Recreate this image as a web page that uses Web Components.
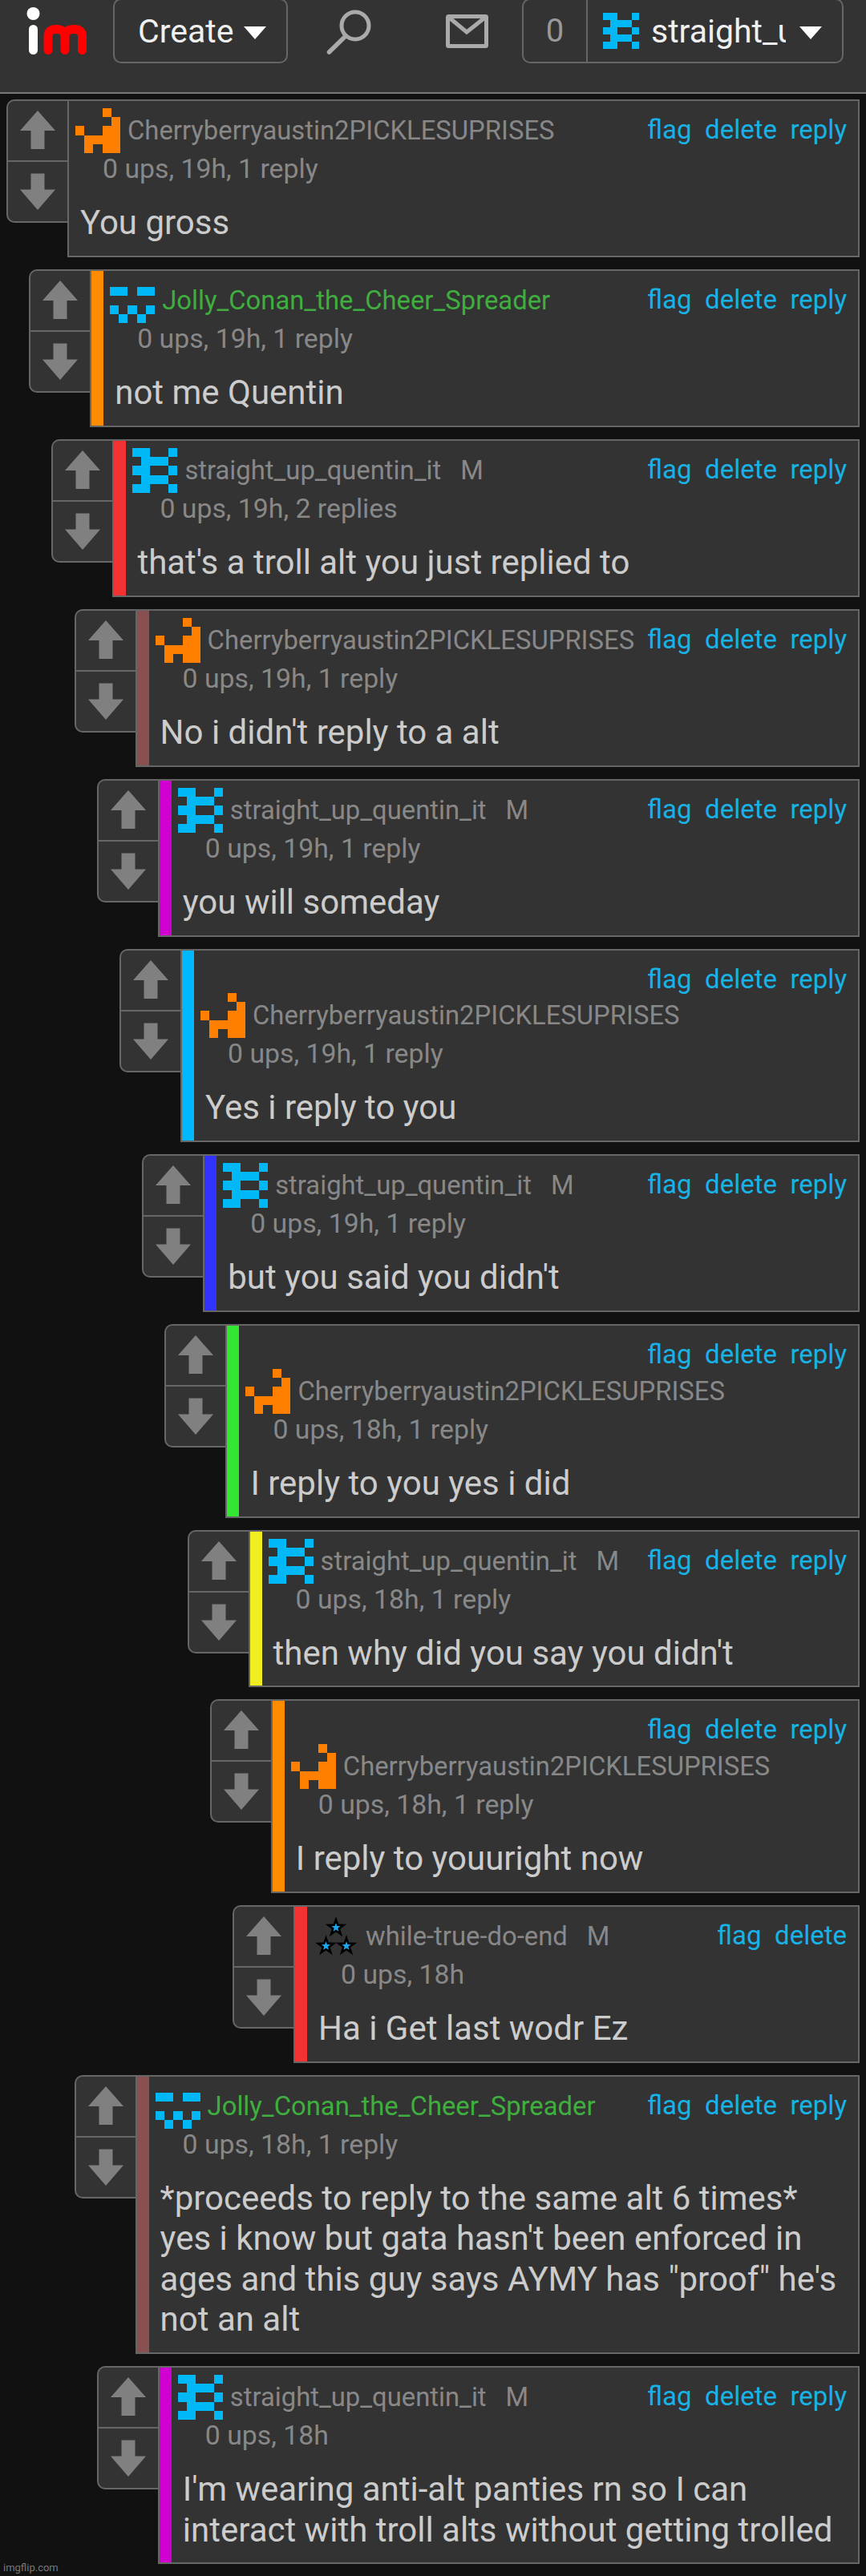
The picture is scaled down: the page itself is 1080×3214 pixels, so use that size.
<!DOCTYPE html>
<html><head><meta charset="utf-8">
<style>
html,body{margin:0;background:#111;font-family:Roboto,"Liberation Sans",sans-serif;}
body{position:relative;height:3214px;overflow:hidden;}
im-thread{display:block;}
</style></head>
<body>
<im-topbar></im-topbar>
<im-thread>
<im-comment level="0" av="cherry" name="Cherryberryaustin2PICKLESUPRISES" meta="0 ups, 19h, 1 reply">You gross</im-comment>
<im-comment level="1" color="#ff8c00" av="jolly" green name="Jolly_Conan_the_Cheer_Spreader" meta="0 ups, 19h, 1 reply">not me Quentin</im-comment>
<im-comment level="2" color="#f33333" av="straight" mod name="straight_up_quentin_it" meta="0 ups, 19h, 2 replies">that's a troll alt you just replied to</im-comment>
<im-comment level="3" color="#885050" av="cherry" name="Cherryberryaustin2PICKLESUPRISES" meta="0 ups, 19h, 1 reply">No i didn't reply to a alt</im-comment>
<im-comment level="4" color="#d000d0" av="straight" mod name="straight_up_quentin_it" meta="0 ups, 19h, 1 reply">you will someday</im-comment>
<im-comment level="5" color="#00b8ff" av="cherry" name="Cherryberryaustin2PICKLESUPRISES" meta="0 ups, 19h, 1 reply">Yes i reply to you</im-comment>
<im-comment level="6" color="#3333ff" av="straight" mod name="straight_up_quentin_it" meta="0 ups, 19h, 1 reply">but you said you didn't</im-comment>
<im-comment level="7" color="#33e633" av="cherry" name="Cherryberryaustin2PICKLESUPRISES" meta="0 ups, 18h, 1 reply">I reply to you yes i did</im-comment>
<im-comment level="8" color="#eeee22" av="straight" mod name="straight_up_quentin_it" meta="0 ups, 18h, 1 reply">then why did you say you didn't</im-comment>
<im-comment level="9" color="#ff8c00" av="cherry" name="Cherryberryaustin2PICKLESUPRISES" meta="0 ups, 18h, 1 reply">I reply to youuright now</im-comment>
<im-comment level="10" color="#f33333" av="stars" mod noreply name="while-true-do-end" meta="0 ups, 18h">Ha i Get last wodr Ez</im-comment>
<im-comment level="3" color="#885050" av="jolly" green name="Jolly_Conan_the_Cheer_Spreader" meta="0 ups, 18h, 1 reply">*proceeds to reply to the same alt 6 times*<br>yes i know but gata hasn't been enforced in<br>ages and this guy says AYMY has "proof" he's<br>not an alt</im-comment>
<im-comment level="4" color="#d000d0" av="straight" mod name="straight_up_quentin_it" meta="0 ups, 18h">I'm wearing anti-alt panties rn so I can<br>interact with troll alts without getting trolled</im-comment>
</im-thread>
<im-watermark>imgflip.com</im-watermark>
<script>
const GRIDS={
 cherry:{c:'#ff7f00',r:['...#.','....#','#..##','.####','.#.##']},
 straight:{c:'#00b8f5',r:['##..#','.###.','##..#','.###.','##..#']},
 jolly:{c:'#00b8f5',r:['.....','##.##','.....','#.#.#','.#.#.']}
};
function star(cx,cy,R,r,fill){let p=[];for(let i=0;i<10;i++){const a=-Math.PI/2+i*Math.PI/5,q=i%2?r:R;p.push((cx+q*Math.cos(a)).toFixed(2)+','+(cy+q*Math.sin(a)).toFixed(2));}return `<polygon points="${p.join(' ')}" fill="${fill}"/>`;}
class ImAvatar extends HTMLElement{
 connectedCallback(){
  const k=this.getAttribute('kind'),s=this.getAttribute('size')||56;
  let inner='';
  if(k==='stars'){
    [[28,17],[15.500,40],[41,40]].forEach(([x,y])=>{inner+=star(x,y,14,5.5,'#000')+star(x,y,5.8,2.4,'#1ea7ee');});
  }else{
    const g=GRIDS[k];
    g.r.forEach((row,y)=>[...row].forEach((ch,x)=>{if(ch==='#')inner+=`<rect x="${x*56/5}" y="${y*56/5}" width="${56/5+.05}" height="${56/5+.05}" fill="${g.c}"/>`;}));
  }
  this.attachShadow({mode:'open'}).innerHTML=`<style>:host{display:block;width:${s}px;height:${s}px;flex:none}svg{display:block}</style><svg width="${s}" height="${s}" viewBox="0 0 56 56" shape-rendering="${k==='stars'?'auto':'crispEdges'}">${inner}</svg>`;
 }
}
customElements.define('im-avatar',ImAvatar);

class ImTopbar extends HTMLElement{
 constructor(){super();this.attachShadow({mode:'open'}).innerHTML=`<style>
 :host{display:flex;align-items:flex-start;height:115px;background:#333;border-bottom:2px solid #777;overflow:hidden;box-sizing:content-box;font-family:Roboto,"Liberation Sans",sans-serif}
 svg{display:block;flex:none}
 .btn{box-sizing:border-box;height:81px;margin-top:-2px;border:2px solid #666;border-radius:10px;display:flex;align-items:center;color:#f0f0f0;font-size:41px;flex:none}
 .create{width:218px;padding-left:29px}
 .caret{width:0;height:0;border-left:14px solid transparent;border-right:14px solid transparent;border-top:16px solid #fff;flex:none;margin-top:4px}
 .create .caret{margin-left:13px}
 .search{margin-left:36px}.mail{margin-left:65px}
 .group{margin-left:36px;width:401px}
 .zero{box-sizing:border-box;width:80px;height:100%;border-right:2px solid #666;display:flex;align-items:center;justify-content:center;color:#999;font-size:40px}
 .who{margin-left:19px}
 .nm{margin-left:15px;width:168px;overflow:hidden;white-space:nowrap;margin-right:17px;line-height:60px}
 </style>
 <svg width="141" height="80" viewBox="0 0 141 80">
  <circle cx="41.5" cy="17" r="8" fill="#fff"/>
  <path d="M41.5 36.5V62.5" stroke="#fff" stroke-width="11" stroke-linecap="round" fill="none"/>
  <path d="M60 62.5V45Q60 36.5 70 36.5Q81 36.5 81 46V62.5M81 46Q81 36.5 92 36.5Q102.5 36.5 102.5 45V62.5" stroke="#f00" stroke-width="11" stroke-linecap="round" fill="none"/>
 </svg>
 <div class="btn create"><span>Create</span><i class="caret"></i></div>
 <svg class="search" width="90" height="80" viewBox="395 0 90 80"><circle cx="443" cy="32" r="17" stroke="#aaa" stroke-width="5" fill="none"/><path d="M431 45L410.500 65" stroke="#aaa" stroke-width="5.500" stroke-linecap="round"/></svg>
 <svg class="mail" width="65" height="80" viewBox="550 0 65 80"><rect x="558.500" y="20.500" width="48" height="37" rx="1" stroke="#aaa" stroke-width="5" fill="none"/><path d="M559 21L582 40L606 21" stroke="#aaa" stroke-width="5" fill="none"/></svg>
 <div class="btn group"><div class="zero">0</div><im-avatar class="who" kind="straight" size="45"></im-avatar><div class="nm">straight_up_quentin_it</div><i class="caret"></i></div>`;}
}
customElements.define('im-topbar',ImTopbar);

class ImVote extends HTMLElement{
 constructor(){super();this.attachShadow({mode:'open'}).innerHTML=`<style>
 :host{display:block;box-sizing:border-box;width:76px;height:154px;flex:none;border:2px solid #666;border-right:0;border-radius:10px 0 0 10px;background:#333}
 svg{display:block}
 .d{border-top:2px solid #666}
 </style>
 <svg width="74" height="74" viewBox="0 0 74 74"><path d="M15 37L37 12L59 37H45.500V60H28.500V37Z" fill="#808080"/></svg>
 <div class="d"><svg width="74" height="74" viewBox="0 0 74 74"><path d="M28.500 14.500H45.500V34.500H59L37 60L15 34.500H28.500Z" fill="#808080"/></svg></div>`;}
}
customElements.define('im-vote',ImVote);

class ImComment extends HTMLElement{
 connectedCallback(){
  const a=n=>this.getAttribute(n),h=n=>this.hasAttribute(n);
  const lvl=+a('level')||0;
  const bar=a('color');
  this.attachShadow({mode:'open'}).innerHTML=`<style>
 :host{display:flex;align-items:flex-start;margin:0 8px 15px ${(lvl*28.2+8).toFixed(2)}px;font-family:Roboto,"Liberation Sans",sans-serif}
 :host(:first-child){margin-top:7px}
 .body{flex:1;min-width:0;box-sizing:border-box;border:2px solid #666;background:#333}
 .in{${bar?`border-left:15px solid ${bar};`:''}padding-bottom:15.4px}
 .head{line-height:0;font-size:0}
 .acts{float:right;margin:20px 14px -7.7px 0;font-size:33px;line-height:32px;color:#17b3e6;display:flex;gap:16.5px}
 .who{display:inline-flex;vertical-align:top;align-items:center;margin:9px 0 0 8px;font-size:32.8px;line-height:40px;color:${h('green')?'#3fae3f':'#888'};white-space:nowrap}
 .who span{margin-left:9px}
 .who b{font-weight:400;color:#888;margin-left:24px}
 .meta{margin:-4px 0 0 42px;font-size:33.8px;line-height:48px;color:#888}
 .txt{margin:18.2px 14px 0 14px;font-size:42px;line-height:50.4px;color:#ccc}
 </style>
 <im-vote></im-vote>
 <div class="body"><div class="in">
  <div class="head"><div class="acts"><span>flag</span><span>delete</span>${h('noreply')?'':'<span>reply</span>'}</div>
  <div class="who"><im-avatar kind="${a('av')}"></im-avatar><span>${a('name')}</span>${h('mod')?'<b>M</b>':''}</div></div>
  <div class="meta">${a('meta')}</div>
  <div class="txt"><slot></slot></div>
 </div></div>`;
 }
}
customElements.define('im-comment',ImComment);

class ImWatermark extends HTMLElement{
 constructor(){super();this.attachShadow({mode:'open'}).innerHTML=`<style>:host{position:absolute;left:4px;bottom:2px;font-size:13px;line-height:16px;color:#777}</style><slot></slot>`;}
}
customElements.define('im-watermark',ImWatermark);
</script>
</body></html>
